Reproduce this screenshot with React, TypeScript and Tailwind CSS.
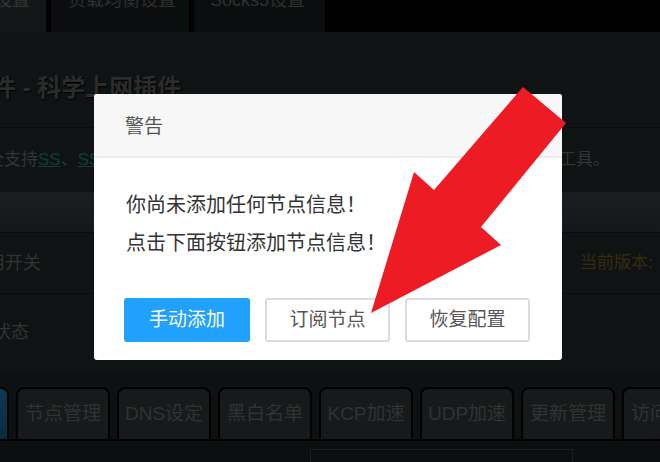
import React from 'react';

const navTabs = ['节点管理', 'DNS设定', '黑白名单', 'KCP加速', 'UDP加速', '更新管理', '访问控制'];

const App: React.FC = () => {
  return (
    <div className="relative w-[660px] h-[462px] overflow-hidden bg-[#101314] font-['Liberation_Sans','Noto_Sans_CJK_SC',sans-serif]">
      {/* top tab strip, scrolled so only the lower part shows */}
      <div className="flex h-[32px] gap-[5px] bg-black">
        <div className="w-[46px] bg-[#141718] overflow-hidden">
          <div className="-mt-[9px] -ml-[6px] text-[18px] leading-none text-[#333435] whitespace-nowrap">设置</div>
        </div>
        <div className="w-[138px] bg-[#0b0d0e] overflow-hidden">
          <div className="-mt-[9px] pl-[17px] text-[18px] leading-none text-[#2f3030] whitespace-nowrap">负载均衡设置</div>
        </div>
        <div className="w-[131px] bg-[#0b0d0e] overflow-hidden">
          <div className="-mt-[9px] pl-[16px] text-[18px] leading-none text-[#2f3030] whitespace-nowrap">Socks5设置</div>
        </div>
      </div>

      {/* page heading */}
      <div className="h-[95px] pt-[44px]">
        <div className="-ml-[8px] text-[24px] font-bold leading-none text-[#2a2c2d] [text-shadow:1px_1px_1px_#000] whitespace-nowrap">
          件 - 科学上网插件
        </div>
      </div>

      {/* description */}
      <div className="h-[65px] border-t border-[#0a0b0c] flex items-center justify-between pr-[50px]">
        <div className="-ml-[13px] text-[17px] text-[#343434] whitespace-nowrap">
          全支持<span className="text-[#0a4033] underline">SS</span>、<span className="text-[#0a4033] underline">SSR</span>
        </div>
        <div className="text-[17px] text-[#343434] whitespace-nowrap">工具。</div>
      </div>

      {/* section band */}
      <div className="h-[40px] bg-gradient-to-b from-[#1b1e20] to-[#15181a]" />

      <div className="h-[61px] border-t border-[#0a0b0c] flex items-center justify-between">
        <div className="-ml-[13px] text-[18px] text-[#323333] whitespace-nowrap">用开关</div>
        <div className="w-[80px] text-[17px] text-[#382b0c] whitespace-nowrap">当前版本:</div>
      </div>

      <div className="h-[77px] border-t border-[#0a0b0c] flex items-center">
        <div className="-ml-[7px] text-[18px] text-[#323333] whitespace-nowrap">状态</div>
      </div>

      {/* nav buttons */}
      <div className="h-[71px] pt-[17px] bg-[#0e1112] border-b-2 border-black flex gap-[7px] -ml-[84px]">
        <div className="w-[93px] shrink-0 h-[54px] rounded-t-[8px] border-2 border-black bg-gradient-to-b from-[#0e3a54] to-[#0a2a3d] flex items-center justify-center text-[19px] text-[#36474f]">
          服务管理
        </div>
        {navTabs.map((t) => (
          <div
            key={t}
            className="w-[94px] shrink-0 h-[54px] rounded-t-[8px] border-2 border-black bg-[#17191b] flex items-center justify-center text-[19px] text-[#313232] whitespace-nowrap"
          >
            {t}
          </div>
        ))}
      </div>
      <div className="h-[21px] bg-[#0c0e10] pt-[8px] pl-[310px]">
        <div className="w-[263px] h-[20px] border border-[#1d1e1f]" />
      </div>

      {/* warning dialog */}
      <div className="absolute left-[94px] top-[94px] w-[468px] h-[266px] bg-white rounded-[3px] overflow-hidden">
        <div className="h-[64px] bg-[#f7f7f7] border-b-2 border-[#ececec] px-[31px] pt-[4px] flex items-center text-[19px] text-[#555]">
          警告
        </div>
        <div className="px-[32px] pt-[28px] text-[20px] leading-[38px] text-[#333]">
          <div>你尚未添加任何节点信息！</div>
          <div>点击下面按钮添加节点信息！</div>
        </div>
        <div className="mt-[36px] px-[30px] flex gap-[15px]">
          <button className="w-[126px] h-[44px] rounded-[3px] bg-[#1fa1fd] text-white text-[19px]">手动添加</button>
          <button className="w-[125px] h-[44px] rounded-[3px] border-2 border-[#dcdcdc] bg-white text-[#555] text-[19px]">订阅节点</button>
          <button className="w-[125px] h-[44px] rounded-[3px] border-2 border-[#dcdcdc] bg-white text-[#555] text-[19px]">恢复配置</button>
        </div>
      </div>

      {/* red arrow annotation */}
      <svg className="absolute left-0 top-0 pointer-events-none" width="660" height="462" viewBox="0 0 660 462">
        <polygon points="523,87 566,123 481,227 501,245 371,313 414,172 434,190" fill="#ed1c24" />
      </svg>
    </div>
  );
};

export default App;
